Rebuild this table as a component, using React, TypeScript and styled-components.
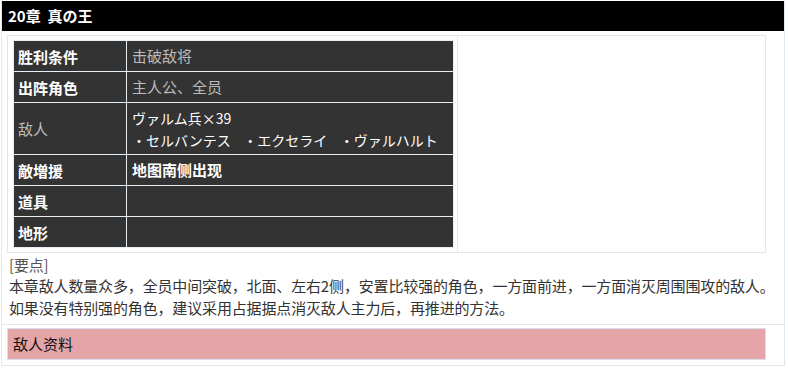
import styled, { createGlobalStyle } from 'styled-components';

type InfoRow = {
   label: string;
   lines: string[];
   strongLabel?: boolean;
   strongValue?: boolean;
   dimValue?: boolean;
   small?: boolean;
};

const rows: InfoRow[] = [
   { label: '胜利条件', lines: ['击破敌将'], strongLabel: true, dimValue: true },
   { label: '出阵角色', lines: ['主人公、全员'], strongLabel: true, dimValue: true },
   { label: '敌人', lines: ['ヴァルム兵×39', '・セルバンテス    ・エクセライ    ・ヴァルハルト'], small: true },
   { label: '敵増援', lines: ['地图南侧出现'], strongLabel: true, strongValue: true },
   { label: '道具', lines: [], strongLabel: true },
   { label: '地形', lines: [], strongLabel: true },
];

const GlobalStyle = createGlobalStyle`
   body{
      margin: 0;
      background: #fff;
      font-family: "Noto Sans CJK SC", "Noto Sans", sans-serif;
      font-size: 15px;
      color: #333;
   }
`;

export default function App() {
   return (
      <>
         <GlobalStyle />
         <Page>
            <Title>20章&nbsp;&nbsp;真の王</Title>
            <Body>
               <LayoutTable>
                  <tbody>
                     <tr>
                        <LeftCell>
                           <InfoTable>
                              <tbody>
                                 {rows.map((row) =>
                                    <InfoTr key={row.label} $tall={row.lines.length > 1}>
                                       <Label $strong={row.strongLabel}>{row.label}</Label>
                                       <Value $strong={row.strongValue} $dim={row.dimValue} $small={row.small}>
                                          {row.lines.map((line) => <div key={line}>{line}</div>)}
                                       </Value>
                                    </InfoTr>
                                 )}
                              </tbody>
                           </InfoTable>
                        </LeftCell>
                        <RightCell />
                     </tr>
                  </tbody>
               </LayoutTable>
               <Notes>
                  <NoteHead>[要点]</NoteHead>
                  <p>本章敌人数量众多，全员中间突破，北面、左右2侧，安置比较强的角色，一方面前进，一方面消灭周围围攻的敌人。</p>
                  <p>如果没有特别强的角色，建议采用占据据点消灭敌人主力后，再推进的方法。</p>
               </Notes>
            </Body>
            <Footer>
               <EnemyBar>敌人资料</EnemyBar>
            </Footer>
         </Page>
      </>
   );
}

const Page = styled.div`
   width: 782px;
   margin-left: 1px;
   border: 1px solid #dde8f3;
   border-top: none;
`;

const Title = styled.h2`
   margin: 1px 0 0;
   height: 30px;
   line-height: 30px;
   padding-left: 6px;
   background: #000;
   color: #fff;
   font-size: 15px;
   font-weight: 700;
`;

const Body = styled.div`
   padding: 4px 0 5px 5px;
`;

const LayoutTable = styled.table`
   width: 759px;
   border-collapse: collapse;
   > tbody > tr > td{ border: 1px solid #dde8f3; vertical-align: top; }
`;

const LeftCell = styled.td`
   width: 441px;
   padding: 4px 3px 4px 5px;
`;

const RightCell = styled.td``;

const InfoTable = styled.table`
   width: 441px;
   border-collapse: collapse;
   background: #333;
   td{ border: 1px solid #e9eff6; vertical-align: middle; }
`;

const InfoTr = styled.tr<{ $tall?: boolean }>`
   height: ${({ $tall }) => ($tall ? '52px' : '31px')};
`;

const Label = styled.td<{ $strong?: boolean }>`
   width: 104px;
   padding: 0 4px;
   color: ${({ $strong }) => ($strong ? '#fff' : '#bbb')};
   font-weight: ${({ $strong }) => ($strong ? 700 : 400)};
`;

const Value = styled.td<{ $strong?: boolean; $dim?: boolean; $small?: boolean }>`
   padding: 0 5px;
   line-height: 22px;
   white-space: pre;
   font-size: ${({ $small }) => ($small ? '14px' : '15px')};
   color: ${({ $dim }) => ($dim ? '#bbb' : '#fff')};
   font-weight: ${({ $strong }) => ($strong ? 700 : 400)};
`;

const Notes = styled.div`
   padding: 2px 0 0 2px;
   line-height: 22px;
   letter-spacing: -0.15px;
   white-space: nowrap;
   p{ margin: 0; }
`;

const NoteHead = styled.div`
   color: #555;
   line-height: 20px;
`;

const Footer = styled.div`
   border-top: 1px solid #dde8f3;
   padding: 3px 18px 5px 5px;
`;

const EnemyBar = styled.div`
   height: 30px;
   line-height: 30px;
   padding-left: 5px;
   background: #e5a5a8;
   border: 1px solid #d3e0ee;
   color: #111;
`;
